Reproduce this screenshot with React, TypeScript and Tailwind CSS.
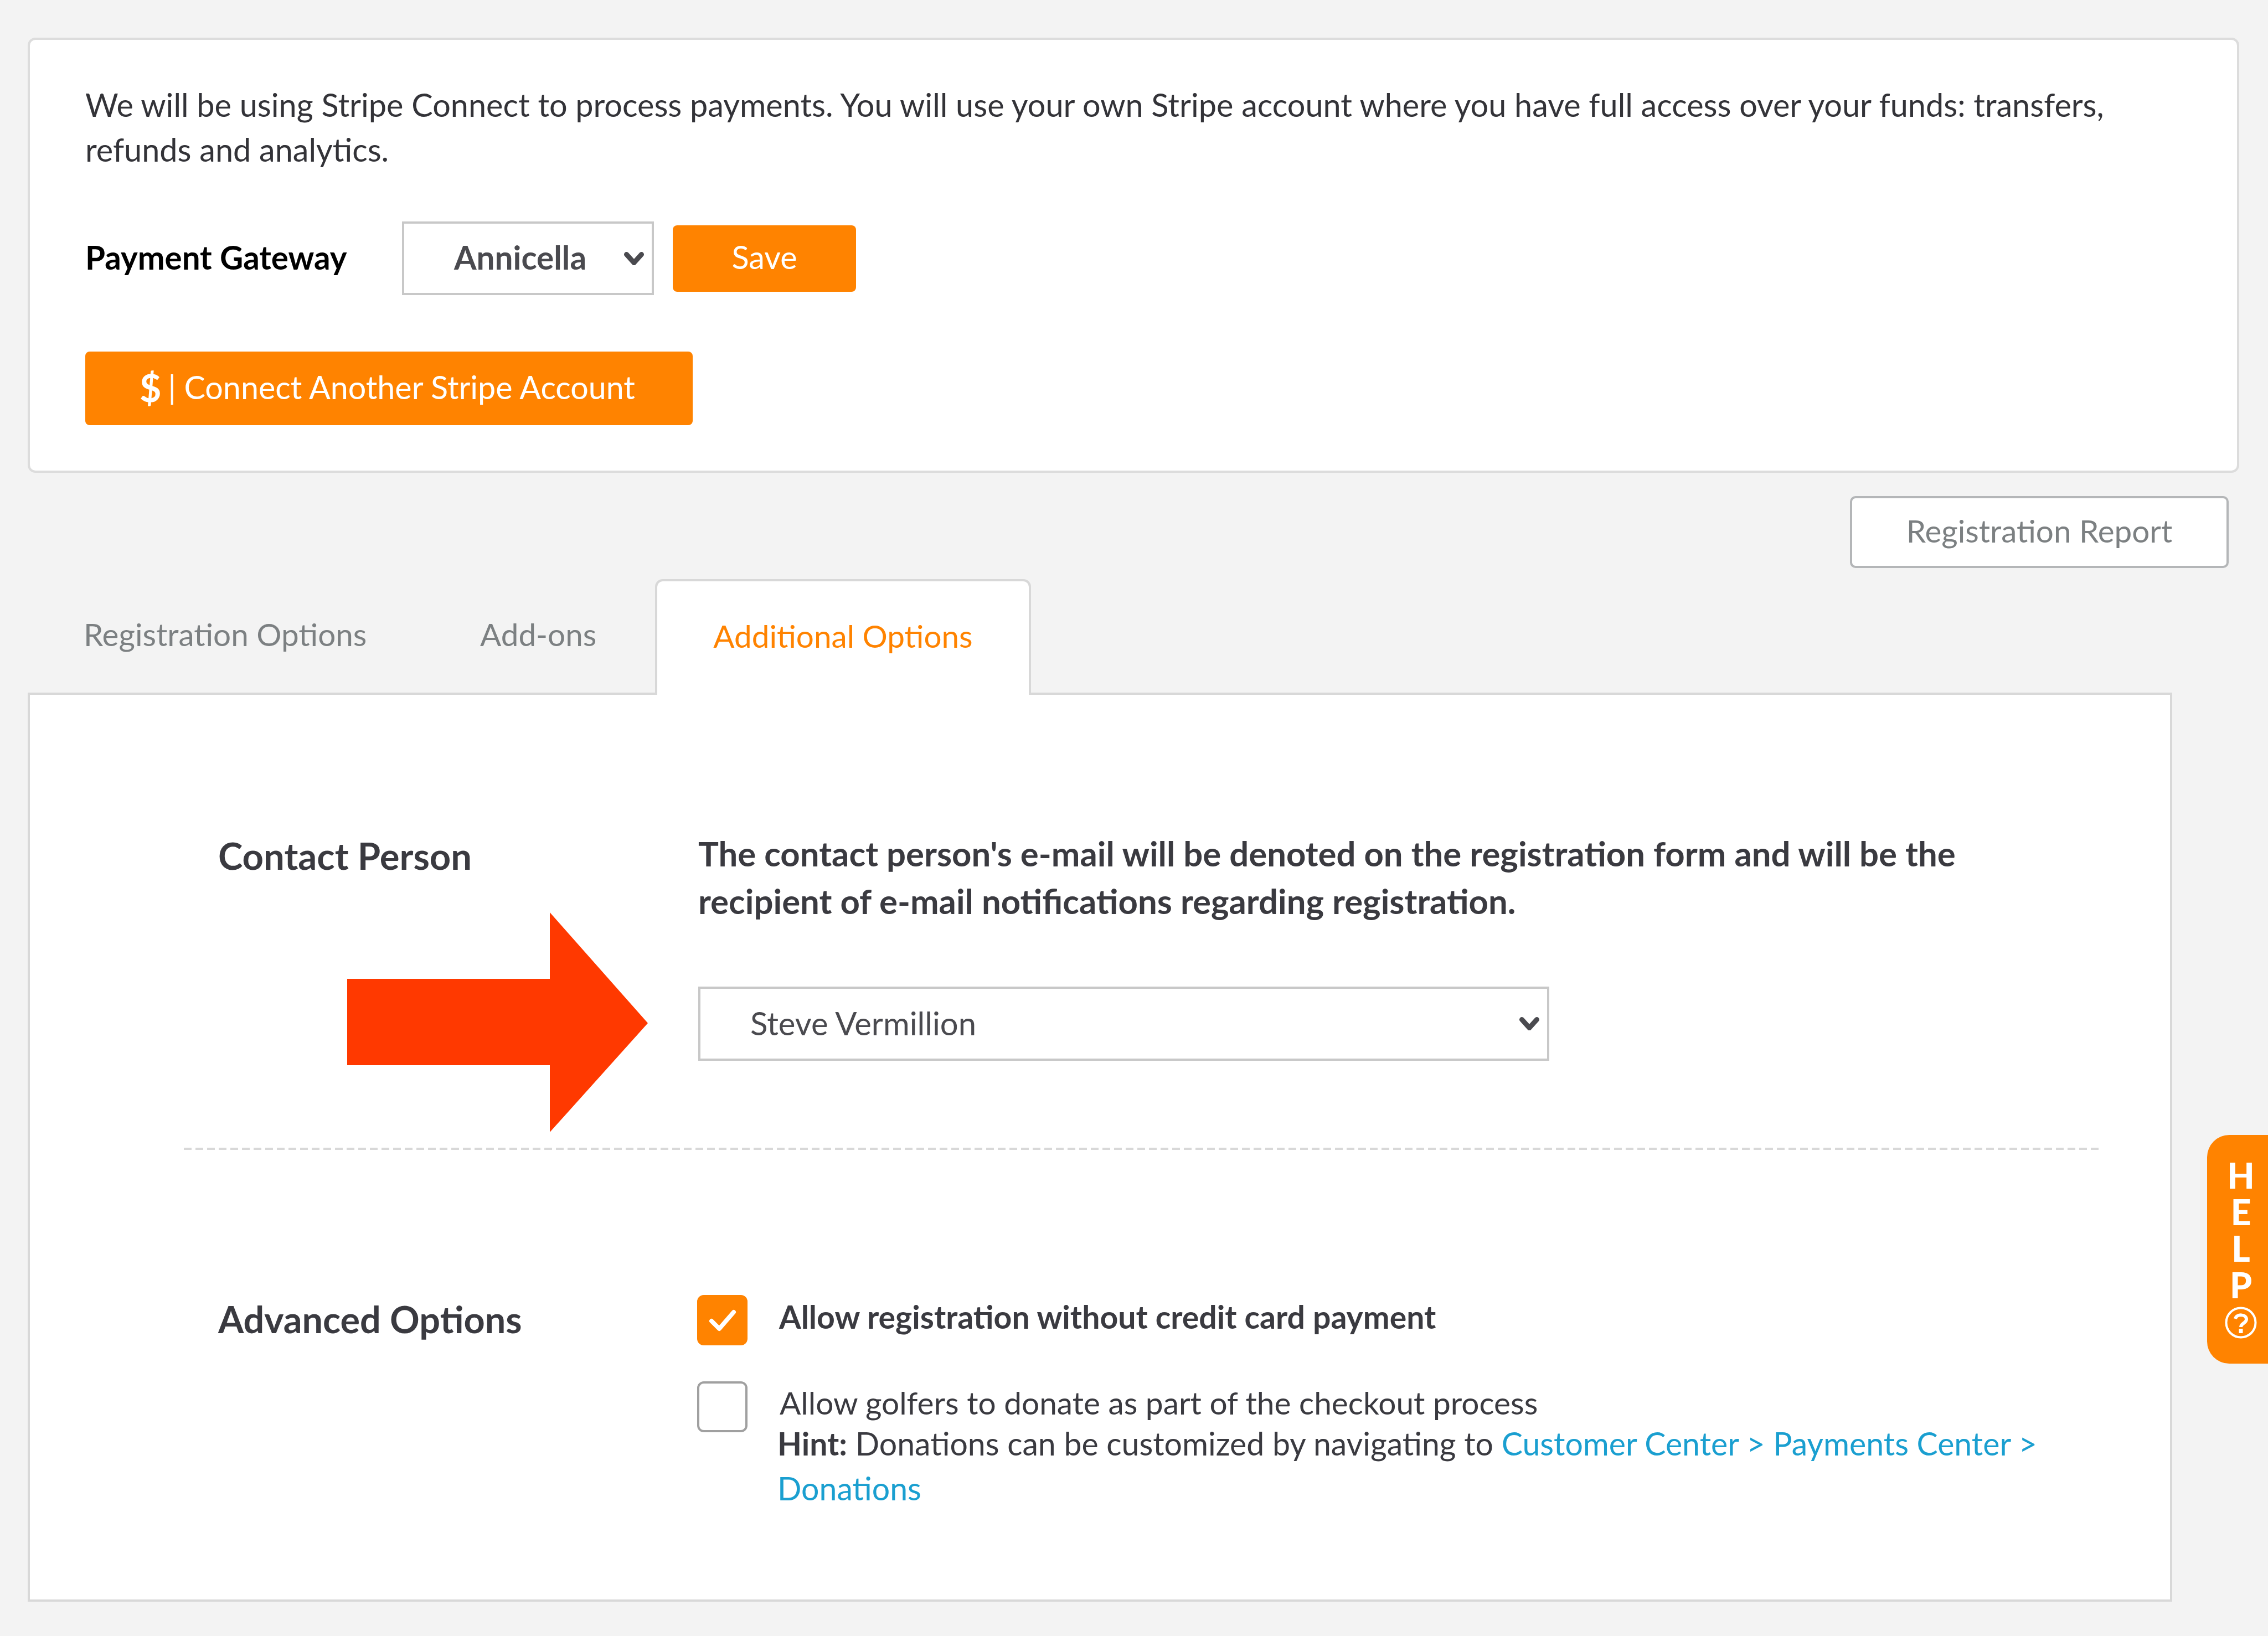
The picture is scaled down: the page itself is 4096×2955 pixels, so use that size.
const orange = 'bg-[#ff8300]'

function Chevron({ className }: { className: string }) {
  return (
    <svg className={className} viewBox="0 0 24 16" fill="none" stroke="#4a4a4f" strokeWidth={6} strokeLinecap="round">
      <path d="M3 3l9 10 9-10" />
    </svg>
  )
}

export default function App() {
  return (
    <div className="relative min-h-[2955px] w-[4096px] overflow-hidden bg-[#f3f3f3] pt-[68px] font-['Lato',sans-serif] text-[57.6px] text-[#333338]">
      {/* Stripe card */}
      <div className="ml-[50px] h-[786px] w-[3994px] rounded-[14px] border-[4px] border-[#dcdcdc] bg-white pl-[100px] pr-[200px] pt-[76px]">
        <p className="leading-[81px]">
          We will be using Stripe Connect to process payments. You will use your own Stripe account where you have full access over your funds: transfers, refunds and analytics.
        </p>
        <div className="mt-[90px] flex items-center">
          <span className="w-[572px] pb-[4px] text-[58.3px] font-bold text-black">Payment Gateway</span>
          <div className="flex h-[133px] w-[455px] items-center justify-between border-[4px] border-[#c8c8c8] pl-[90px] pr-[14px] text-[58.5px] font-bold text-[#4a4a4f]">
            <span className="pb-[4px]">Annicella</span>
            <Chevron className="w-[36px]" />
          </div>
          <button className={`${orange} ml-[34px] h-[120px] w-[331px] rounded-[8px] pb-[4px] text-white`}>Save</button>
        </div>
        <button className={`${orange} mt-[102px] flex h-[133px] w-[1097px] items-center justify-center rounded-[8px] pb-[4px] pr-[6px] text-[57.4px] text-white`}>
          <span className="mr-[12px] text-[68px] font-bold">$</span>| Connect Another Stripe Account
        </button>
      </div>

      <div className="mr-[71px] mt-[42px] flex justify-end">
        <button className="h-[130px] w-[684px] rounded-[10px] border-[4px] border-[#b4b6b8] bg-white pb-[6px] text-[56.6px] text-[#7c8082]">Registration Report</button>
      </div>

      {/* Tabs */}
      <div className="relative z-10 ml-[50px] mt-[20px] flex h-[205px] items-center text-[56.6px] text-[#7c8082]">
        <span className="mb-[6px] ml-[101px] w-[716px]">Registration Options</span>
        <span className="mb-[6px] w-[316px]">Add-ons</span>
        <div className="flex h-[209px] w-[679px] items-start justify-center self-start rounded-t-[14px] border-[4px] border-b-0 border-[#d8d8d8] bg-white pt-[56px] text-[#ff8300]">
          Additional Options
        </div>
      </div>

      {/* Panel */}
      <div className="ml-[50px] h-[1642px] w-[3873px] border-[4px] border-[#d8d8d8] bg-white pl-[278px] pr-[124px] pt-[245px] text-[#3a3a40]">
        <div className="flex pl-[62px]">
          <h3 className="w-[867px] text-[67px] font-bold leading-[90px]">Contact Person</h3>
          <div>
            <p className="-mt-[2px] w-[2350px] text-[61.7px] font-bold leading-[86px]">
              The contact person's e-mail will be denoted on the registration form and will be the recipient of e-mail notifications regarding registration.
            </p>
            <div className="mt-[112px] flex h-[134px] w-[1537px] items-center justify-between border-[4px] border-[#c8c8c8] pl-[90px] pr-[14px] text-[58px] text-[#4a4a4f]">
              <span className="pb-[4px]">Steve Vermillion</span>
              <Chevron className="w-[36px]" />
            </div>
          </div>
        </div>

        <div className="mt-[157px] h-[4px] bg-[repeating-linear-gradient(90deg,#d8d8d8_0_14px,transparent_14px_21px)]" />

        <div className="mt-[262px] flex pl-[62px]">
          <h3 className="-mt-[2px] w-[865px] text-[66.6px] font-bold leading-[90px]">Advanced Options</h3>
          <div>
            <div className="flex">
              <div className={`${orange} flex h-[91px] w-[91px] items-center justify-center rounded-[12px]`}>
                <svg className="w-[50px]" viewBox="0 0 50 40" fill="none" stroke="white" strokeWidth={8} strokeLinecap="round" strokeLinejoin="round">
                  <path d="M5 21l14 14L45 5" />
                </svg>
              </div>
              <span className="ml-[57px] text-[57.2px] font-bold leading-[78px]">Allow registration without credit card payment</span>
            </div>
            <div className="mt-[65px] flex">
              <div className="h-[92px] w-[91px] shrink-0 rounded-[12px] border-[4px] border-[#a0a0a0] bg-white" />
              <div className="ml-[54px] mt-[4px] w-[2330px] text-[57.2px]">
                <p className="pl-[4px] text-[56.8px] leading-[68px]">Allow golfers to donate as part of the checkout process</p>
                <p className="leading-[81px]">
                  <b>Hint:</b> Donations can be customized by navigating to{' '}
                  <span className="text-[#1a9fd0]">Customer Center &gt; Payments Center &gt; Donations</span>
                </p>
              </div>
            </div>
          </div>
        </div>
      </div>

      {/* Annotation arrow */}
      <svg className="absolute left-[627px] top-[1648px] h-[397px] w-[543px]" viewBox="0 0 543 397">
        <path d="M0 120H366V0L543 200L366 397V276H0Z" fill="#ff3900" />
      </svg>

      {/* Help tab */}
      <div className="absolute left-[3986px] top-[2050px] flex h-[413px] w-[110px] flex-col items-center rounded-l-[40px] bg-[#ff8300] pl-[12px] pt-[40px] font-black text-white">
        <span className="text-[64px] leading-[66px]">H</span>
        <span className="text-[64px] leading-[66px]">E</span>
        <span className="text-[64px] leading-[66px]">L</span>
        <span className="text-[64px] leading-[66px]">P</span>
        <svg className="mt-[6px] h-[58px] w-[58px]" viewBox="0 0 58 58" fill="none" stroke="white">
          <circle cx="29" cy="29" r="26.5" strokeWidth={4} />
          <path d="M19 22c2-9 20-9 20 1 0 7-10 7-10 14" strokeWidth={6} />
          <path d="M29 40v8" strokeWidth={7} />
        </svg>
      </div>
    </div>
  )
}
